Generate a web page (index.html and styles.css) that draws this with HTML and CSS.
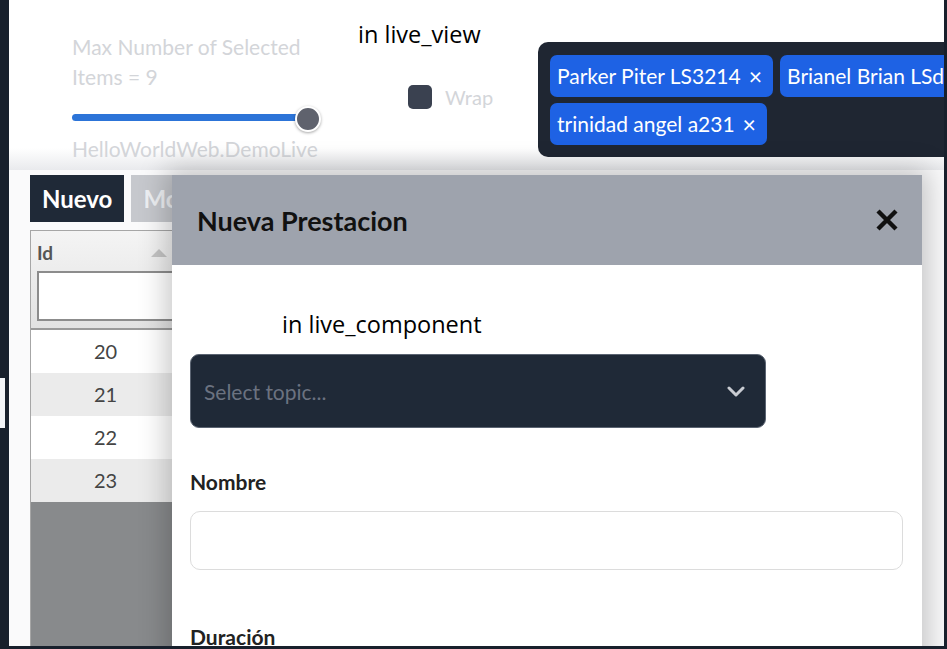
FILE: index.html
```html
<!DOCTYPE html>
<html lang="es">
<head>
<meta charset="utf-8">
<title>Nueva Prestacion</title>
<link rel="stylesheet" href="styles.css">
</head>
<body>
<div class="screen">
  <div class="frame">
    <div class="edge-left"><div class="edge-mark"></div></div>
    <div class="main">
      <section class="top">
        <div class="controls">
          <div class="limit-label">Max Number of Selected Items = 9</div>
          <div class="slider">
            <div class="track"></div>
            <div class="thumb"></div>
          </div>
          <div class="app-name">HelloWorldWeb.DemoLive</div>
        </div>
        <label class="toggle"><span class="checkbox"></span><span>Wrap</span></label>
        <div class="tags">
          <span class="tag">Parker Piter LS3214 <span class="x">×</span></span>
          <span class="tag">Brianel Brian LSd <span class="x">×</span></span>
          <span class="tag">trinidad angel a231 <span class="x">×</span></span>
        </div>
        <div class="note note-view">in live_view</div>
      </section>
      <section class="work">
        <div class="toolbar">
          <button class="btn btn-dark">Nuevo</button>
          <button class="btn btn-light">Modificar</button>
        </div>
        <div class="grid">
          <div class="grid-head">
            <div class="head-cell">
              <div class="head-title"><span>Id</span>
                <svg class="sort" width="16" height="8" viewBox="0 0 16 8"><polygon points="0,8 8,0 16,8" fill="#c4c4c4"/></svg>
              </div>
              <div class="filter"></div>
            </div>
          </div>
          <div class="grid-row">20</div>
          <div class="grid-row alt">21</div>
          <div class="grid-row">22</div>
          <div class="grid-row alt">23</div>
        </div>
        <div class="modal">
          <div class="modal-head">
            <h2 class="modal-title">Nueva Prestacion</h2>
            <svg class="close" width="22" height="22" viewBox="0 0 22 22"><path d="M2 2 L20 20 M20 2 L2 20" stroke="#111" stroke-width="4.4"/></svg>
          </div>
          <div class="modal-body">
            <div class="note note-comp">in live_component</div>
            <div class="select">
              <span class="placeholder">Select topic...</span>
              <svg width="18" height="11" viewBox="0 0 18 11"><path d="M2 2 L9 9 L16 2" fill="none" stroke="#c9ccd2" stroke-width="3" stroke-linecap="round" stroke-linejoin="round"/></svg>
            </div>
            <div class="field-label">Nombre</div>
            <div class="text-input"></div>
            <div class="field-label second">Duración</div>
          </div>
        </div>
      </section>
    </div>
    <div class="edge-right"></div>
  </div>
  <div class="edge-bottom"></div>
</div>
</body>
</html>
```
FILE: styles.css
```css
* { box-sizing: border-box; margin: 0; padding: 0; }
html, body { width: 947px; height: 649px; overflow: hidden; }
body { font-family: Lato, "Noto Sans", sans-serif; background: #fff; }

.screen { display: flex; flex-direction: column; height: 649px; }
.frame { flex: 1; display: flex; min-height: 0; }
.edge-left { width: 9px; flex-shrink: 0; background: #18202c; }
.edge-mark { margin-top: 378px; width: 5px; height: 50px; background: #f2f4f7; }
.edge-right { width: 3px; flex-shrink: 0; background: #18202c; }
.edge-bottom { height: 3px; background: #18202c; }
.main { flex: 1; min-width: 0; display: flex; flex-direction: column; overflow: hidden; position: relative; }

/* top area */
.top {
  height: 170px; flex-shrink: 0; display: flex; align-items: flex-start;
  padding-left: 63px; position: relative; overflow: hidden;
  background: linear-gradient(#fff 0, #fff 148px, #e9eaed 170px);
}
.controls { width: 250px; flex-shrink: 0; margin-top: 32px; color: #d3d5d9; font-size: 21px; }
.limit-label { width: 240px; line-height: 30px; }
.slider { position: relative; margin-top: 14px; height: 26px; width: 250px; }
.track { position: absolute; left: 0; top: 8px; width: 236px; height: 7px; border-radius: 4px; background: #2c74d8; }
.thumb {
  position: absolute; left: 223px; top: 0; width: 26px; height: 26px; border-radius: 50%;
  background: #5f626d; border: 2px solid #fff; box-shadow: 0 1px 3px rgba(0,0,0,.35);
}
.app-name { margin-top: 5px; line-height: 24px; white-space: nowrap; }

.toggle {
  margin-left: 86px; margin-top: 85px; width: 130px; flex-shrink: 0;
  display: flex; align-items: center; gap: 13px; color: #d3d5d9; font-size: 20px; line-height: 24px;
}
.checkbox { width: 24px; height: 24px; border-radius: 5px; background: #3a4150; }

.tags {
  margin-top: 42px; width: 480px; flex-shrink: 0; height: 115px;
  background: #1f2632; border-radius: 10px; padding: 13px 12px 12px;
  display: flex; flex-wrap: wrap; align-content: flex-start; gap: 6px 7px;
}
.tag {
  height: 42px; display: flex; align-items: center; gap: 8px; white-space: nowrap;
  background: #1e62e4; color: #fff; border-radius: 7px; padding: 0 11px 0 7px; font-size: 21px; line-height: 26px;
}
.tag .x { font-size: 23px; }

.note { position: absolute; font-family: "Open Sans", sans-serif; font-size: 23.5px; color: #000; line-height: 28px; white-space: nowrap; }
.note-view { left: 349px; top: 20px; }
.note-comp { left: 110px; top: 45px; }

/* lower area */
.work {
  flex: 1; min-height: 0; position: relative; display: flex; flex-direction: column;
  padding: 5px 0 0 21px; background: #fafafb;
}
.toolbar { display: flex; gap: 7px; }
.btn { height: 47px; padding: 0 12px; border: none; font-family: Lato, sans-serif; font-weight: 700; font-size: 24px; }
.btn-dark { background: #1f2937; color: #fff; }
.btn-light { background: #c6c8cd; color: #eef0f3; }

.grid { margin-top: 8px; width: 300px; flex: 1; border: 1px solid #a6a6a6; border-bottom: none; background: #888a8c; }
.grid-head { height: 99px; background: linear-gradient(#f4f4f4, #e2e2e2); border-bottom: 2px solid #9a9a9a; padding: 10px 0 0 6px; }
.head-cell { width: 136px; }
.head-title { display: flex; justify-content: space-between; align-items: center; font-weight: 700; font-size: 19px; color: #555; line-height: 24px; padding-right: 6px; }
.filter { margin-top: 6px; height: 50px; width: 150px; border: 2px solid #8c8c8c; background: #fff; }
.grid-row { height: 43px; width: 100%; background: #fff; font-size: 20px; color: #444; line-height: 43px; padding-left: 63px; }
.grid-row.alt { background: #ebebeb; }

.modal {
  position: absolute; left: 163px; top: 5px; width: 750px; bottom: -30px;
  background: #fff; box-shadow: 0 0 26px 6px rgba(0,0,0,.22); overflow: hidden;
}
.modal-head { height: 90px; background: #9ea3ad; display: flex; justify-content: space-between; align-items: center; padding: 0 24px 0 25px; }
.modal-title { font-size: 27px; font-weight: 700; color: #111; }
.modal-body { position: relative; padding: 89px 19px 0 18px; }
.select {
  height: 74px; width: 576px; background: #1f2937; border: 1px solid #5b6472; border-radius: 9px;
  display: flex; justify-content: space-between; align-items: center; padding: 0 20px 0 13px;
}
.placeholder { color: #6b7280; font-size: 21px; }
.field-label { margin-top: 42px; font-size: 21px; font-weight: 700; line-height: 24px; color: #222; }
.field-label.second { margin-top: 55px; }
.text-input { margin-top: 17px; height: 59px; border: 1px solid #dcdcdc; border-radius: 10px; }
```
